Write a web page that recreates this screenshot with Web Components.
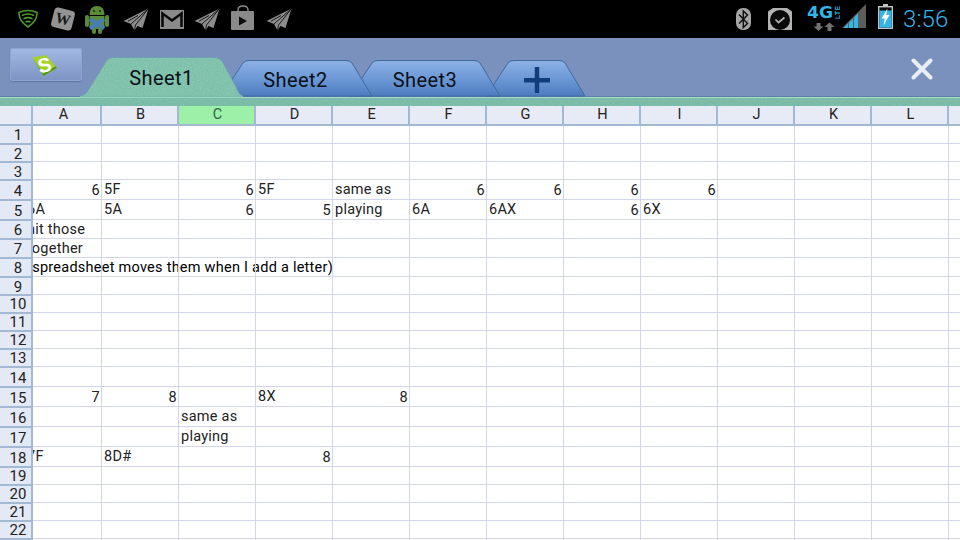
<!DOCTYPE html>
<html><head><meta charset="utf-8"><style>
html,body{margin:0;padding:0;width:960px;height:540px;overflow:hidden;background:#fff}
body{font-family:Roboto,"Liberation Sans",sans-serif}
x-app{display:flex;flex-direction:column;width:960px;height:540px;overflow:hidden}
</style></head><body>
<x-app>
  <x-statusbar></x-statusbar>
  <x-tabbar>
    <x-logo-button></x-logo-button>
    <x-tab variant="active" style="--w:163px;--h:39px;--ml:-2px;z-index:4">Sheet1</x-tab>
    <x-tab style="--w:151px;--h:36px;--ml:-22px;--sx:-2px;z-index:3">Sheet2</x-tab>
    <x-tab style="--w:150px;--h:36px;--ml:-22px;z-index:2">Sheet3</x-tab>
    <x-tab style="--w:99px;--h:36px;--ml:-14px;--sx:2px;--sy:-1px;z-index:1"><svg width="26" height="26" viewBox="0 0 26 26" style="display:block;margin-top:2px"><path d="M0 11h26v4.4H0zM10.800 0h4.400v26h-4.400z" fill="#123d7c"/></svg></x-tab>
    <x-close></x-close>
  </x-tabbar>
  <x-strip></x-strip>
  <x-sheet></x-sheet>
</x-app>
<script>
function def(name, css, html, extra){
  customElements.define(name, class extends HTMLElement{
    constructor(){super();const r=this.attachShadow({mode:'open'});r.innerHTML='<style>'+css+'</style>'+html;}
    connectedCallback(){ if(extra) extra(this); }
  });
}
const plane='<svg width="26" height="23" viewBox="0 0 26 23"><path d="M25.500 .5 .5 13 8 16 11.500 22.500 14.500 18 19.500 20z" fill="#8c8c8c"/><path d="M25.500 .5 8 16M25.500 .5 12.500 17 11.500 22.500M5 13.200 15 7.500" fill="none" stroke="#0c0c0c" stroke-width=".9"/></svg>';
def('x-statusbar',`
 :host{display:flex;align-items:center;height:38px;background:#000;flex:none;box-sizing:border-box;padding-left:18px}
 svg{display:block;flex:none}
 .r{margin-left:auto;display:flex;align-items:center}
 .t{color:#33b5e5;font:300 24px Roboto,sans-serif;margin-left:10px;margin-right:10px;width:47px;letter-spacing:.1px;line-height:38px}
`,`
 <svg width="20" height="19" viewBox="0 0 20 19" style="margin-top:-1px"><path d="M1 3.500Q10-.5 19 3.500 19.500 12 10 18 .5 12 1 3.500z" fill="none" stroke="#4d9a2a" stroke-width="1.600"/><path d="M4 6.500Q10 3.500 16 6.500M5.500 9.800Q10 7.600 14.500 9.800M7.500 13Q10 11.800 12.500 13" fill="none" stroke="#4d9a2a" stroke-width="1.700"/></svg>
 <svg width="27" height="26" viewBox="0 0 27 26" style="margin-left:12px"><rect x="2.500" y="3" width="21" height="20" rx="3.500" fill="#939393" transform="rotate(14 13 13)"/><text x="13" y="18" text-anchor="middle" font-family="Liberation Serif,serif" font-weight="700" font-size="15" fill="#1a1a1a" transform="rotate(14 13 13)">W</text></svg>
 <svg width="24" height="29" viewBox="0 0 24 29" style="margin-left:8px"><path d="M4.500 10Q4.500 1 12 1T19.500 10z" fill="#5b8a36"/><path d="M4.500 11h15v10q0 3-3 3h-9q-3 0-3-3z" fill="#5b8a36"/><rect x="0" y="10" width="4" height="12" rx="2" fill="#5b8a36"/><rect x="20" y="10" width="4" height="12" rx="2" fill="#5b8a36"/><rect x="7" y="23" width="4" height="6" rx="2" fill="#5b8a36"/><rect x="13" y="23" width="4" height="6" rx="2" fill="#5b8a36"/><path d="M5 14l14 9.500M19 14 5 23.500" stroke="#4a7cb4" stroke-width="4.200"/><circle cx="9" cy="6" r="1" fill="#1a2a10"/><circle cx="15" cy="6" r="1" fill="#1a2a10"/></svg>
 <span style="margin-left:14px;display:block">${plane}</span>
 <svg width="24" height="19" viewBox="0 0 24 19" style="margin-left:11px"><rect width="24" height="19" fill="#8a8a8a"/><path d="M2.500 17V3.500L12 10.500 21.500 3.500V17" fill="none" stroke="#0a0a0a" stroke-width="2.600"/></svg>
 <span style="margin-left:10px;display:block">${plane}</span>
 <svg width="24" height="25" viewBox="0 0 24 25" style="margin-left:11px;margin-top:-3px"><path d="M7 7V5q0-4 5-4t5 4v2" fill="none" stroke="#8a8a8a" stroke-width="1.400"/><rect y="6" width="23" height="19" rx="1" fill="#8a8a8a"/><path d="M8 11.500v9L16 16z" fill="#0a0a0a"/></svg>
 <span style="margin-left:11px;display:block">${plane}</span>
 <div class="r">
  <svg width="15" height="23" viewBox="0 0 15 23"><rect width="15" height="22" rx="7" fill="#a6a6a6"/><path d="M3 6.500l8.500 9-4.200 4V3l4.200 4-8.500 8.500" fill="none" stroke="#111" stroke-width="1.500"/></svg>
  <svg width="24" height="24" viewBox="0 0 24 24" style="margin-left:17px"><path d="M0 4.500 5 1h14l5 3.500V23H0z" fill="#b3b3b3"/><circle cx="12" cy="13" r="10" fill="#0a0a0a"/><path d="M7.500 12.500l3 3 6-5" fill="none" stroke="#b3b3b3" stroke-width="1.700"/></svg>
  <svg width="33" height="30" viewBox="0 -4 33 30" style="margin-left:15px;margin-top:-1px;margin-bottom:0;position:relative;top:-2px"><text x="0" y="12" font-family="DejaVu Sans,sans-serif" font-weight="700" font-size="15" fill="#33b5e5" textLength="26" lengthAdjust="spacingAndGlyphs">4G</text><text transform="translate(32.500 13) rotate(-90)" font-family="Liberation Sans,sans-serif" font-weight="700" font-size="6.500" fill="#33b5e5" textLength="13">LTE</text><path d="M7.500 16.500h4v3.500h3L9.500 24.500 4.500 20h3zM20.500 16 25.500 20.500h-3v4h-4v-4h-3z" fill="#727272" transform="translate(2 .5)"/></svg>
  <svg width="24" height="25" viewBox="0 0 24 25" style="margin-left:2px;margin-top:-5px"><path d="M24 0V24H0z" fill="#5d5d5d"/><path d="M1.500 24 6 19.500V24zM7 24V18.500L11 14.500V24zM12 24V13.500L16 9.500V24z" fill="#33b5e5"/></svg>
  <svg width="15" height="25" viewBox="0 0 15 25" style="margin-left:12px;margin-top:-5px"><path d="M5 0h5v2H5z" fill="#c4c4c4"/><rect x=".7" y="2.700" width="13.600" height="21.600" fill="#0a0a0a" stroke="#c4c4c4" stroke-width="1.400"/><rect x="1.400" y="6.500" width="12.200" height="17.100" fill="#33b5e5"/><path d="M9.500 4.500 3.500 14.500h3.200L5.500 21.500l6-10.500H8.300z" fill="#fff"/></svg>
  <span class="t">3:56</span>
 </div>
`);
def('x-tabbar',`
 :host{display:flex;align-items:flex-end;height:59px;flex:none;box-sizing:border-box;padding-left:10px;background:#7a90bd;border-bottom:1px solid #5e7fa8;position:relative}
`,`<slot></slot>`);
def('x-logo-button',`
 :host{display:flex;align-items:center;justify-content:center;width:72px;height:33px;align-self:flex-start;margin-top:10px;flex:none;box-sizing:border-box;border-radius:3px;background:linear-gradient(#a2b9e4,#7d94c4);box-shadow:0 1px 1px #5f75a2,inset 0 0 0 1px #8fa5d2}
 svg{display:block;margin-left:-2px}
`,`<svg width="26" height="24" viewBox="0 0 26 24"><path d="M.5 4.500 14 2 25 15 11.500 23z" fill="#a4d226"/><path d="M11.500 23 25 15 23.500 13.200 11 20.500 1.500 6 .5 4.500z" fill="#4e9a18"/><text x="12.700" y="19" text-anchor="middle" font-family="Liberation Sans,sans-serif" font-weight="700" font-size="20" fill="#fff" transform="rotate(-14 13 13)">S</text></svg>`);
def('x-tab',`
 :host{display:flex;align-items:center;justify-content:center;width:var(--w);height:var(--h);margin-left:var(--ml);position:relative;flex:none;font:20px Roboto,sans-serif;letter-spacing:.42px;color:#0a1018}
 svg.bg{position:absolute;inset:0;width:100%;height:100%;overflow:visible}
 span{position:relative;margin-top:3px;margin-left:var(--sx,0);top:var(--sy,0)}
`,`<svg class="bg"></svg><span><slot></slot></span>`,(el)=>{
  const w=parseInt(el.style.getPropertyValue('--w')),h=parseInt(el.style.getPropertyValue('--h'));
  const s=el.shadowRoot.querySelector('svg.bg');
  s.setAttribute('viewBox',`0 0 ${w} ${h}`);
  if(el.getAttribute('variant')==='active'){
    const d='M0 39.500Q5 39 9 32L27 3Q29 .5 34 .5H134Q139 .5 142 4L156 30Q159 38 163 39.500z';
    s.innerHTML=`<defs><filter id="n" x="0" y="0" width="100%" height="100%"><feTurbulence type="fractalNoise" baseFrequency=".9" numOctaves="2"/><feColorMatrix values="0 0 0 0 1 0 0 0 0 1 0 0 0 0 1 .5 0 0 0 -.1"/><feComposite in2="SourceGraphic" operator="in"/></filter></defs>
    <path d="${d}" fill="#78bea6" stroke="#6c9db4" stroke-width="1"/>
    <path d="${d}" fill="#000" filter="url(#n)" opacity=".5"/>
    <path d="M0 39.500h163" stroke="#78bea6" stroke-width="1.500"/>`;
  } else {
    const tl=24, tr=w-22;
    const id='g'+w;
    s.innerHTML=`<defs><linearGradient id="${id}" x1="0" y1="0" x2="0" y2="1"><stop offset="0" stop-color="#8db2e6"/><stop offset=".55" stop-color="#6a96d4"/><stop offset="1" stop-color="#4d7cbe"/></linearGradient></defs>
    <path d="M0 ${h}L${tl-2} 3Q${tl} .5 ${tl+4} .5H${tr-4}Q${tr} .5 ${tr+2} 3L${w} ${h}z" fill="url(#${id})" stroke="#3f6a9e" stroke-width="1"/>`;
  }
});
def('x-close',`
 :host{display:block;margin-left:auto;margin-right:27px;align-self:flex-start;margin-top:20px;width:22px;height:22px;flex:none}
 svg{display:block}
`,`<svg width="22" height="22" viewBox="0 0 22 22"><path d="M2.500 2.500 19.500 19.500M19.500 2.500 2.500 19.500" stroke="#e9edf5" stroke-width="4" stroke-linecap="round"/></svg>`);
def('x-strip',`
 :host{display:block;height:9px;flex:none;background:#72b8a2;border-top:1px solid #a7dccb;box-sizing:border-box;position:relative;overflow:hidden}
 svg{position:absolute;inset:0;width:100%;height:100%}
`,`<svg><filter id="n"><feTurbulence type="fractalNoise" baseFrequency=".9" numOctaves="2"/><feColorMatrix values="0 0 0 0 1 0 0 0 0 1 0 0 0 0 1 .5 0 0 0 -.1"/></filter><rect width="100%" height="100%" filter="url(#n)" opacity=".45"/></svg>`);
const heights=[18,18,18,20,20,19,19,19,18,18,18,18,18,20,20,20,20,20,18,18,18,18,18];
const cols='ABCDEFGHIJKLM'.split('');
const data={
 '4':{A:[6],B:'5F',C:[6],D:'5F',E:'same as',F:[6],G:[6],H:[6],I:[6]},
 '5':{A:'6A',B:'5A',C:[6],D:[5],E:'playing',F:'6A',G:'6AX',H:[6],I:'6X'},
 '6':{A:'hit those'},'7':{A:'together'},'8':{A:'<b>(spreadsheet moves them when I add a letter)</b>'},
 '15':{A:[7],B:[8],D:'8X',E:[8]},
 '16':{C:'same as'},'17':{C:'playing'},
 '18':{A:'7F',B:'8D#',D:[8]}
};
def('x-sheet',`
 :host{display:grid;grid-template-columns:33px 1fr;grid-template-rows:20px 1fr;flex:1;min-height:0;overflow:hidden;font:14.5px Roboto,sans-serif;color:#222;background:#fff}
 .corner{background:#e6ebf6;border-right:2px solid #a3b9d3;border-bottom:2px solid #a3b9d3;box-sizing:border-box}
 .chead{overflow:hidden;background:#e6ebf6}
 .chead>div{display:grid;grid-template-columns:repeat(13,77px);margin-left:-8px;height:100%}
 .ch{box-sizing:border-box;border-right:2px solid #a3b9d3;border-bottom:2px solid #a3b9d3;text-align:center;padding-left:2px;line-height:17px;font-size:14.5px}
 .ch.sel{background:#9cf0a8;color:#35604a}
 .rhead{display:grid;align-content:start;background:#e4eaf5;overflow:hidden}
 .rh{box-sizing:border-box;background:#e4eaf5;border-right:2px solid #a3b9d3;border-top:1px solid #a3b9d3;border-bottom:1px solid #a3b9d3;display:flex;align-items:center;justify-content:center;font-size:15px;padding-left:5px;padding-top:1px}
 .rh.first{border-top:none}
 .rh.up{padding-top:0}
 .bodyv{overflow:hidden}
 .body{display:grid;grid-template-columns:repeat(13,77px);margin-left:-8px;align-content:start}
 .c{box-sizing:border-box;border-right:1px solid #d3d5e8;border-bottom:1px solid #d3d5e8;white-space:nowrap;padding:1px 2px 0;line-height:17px;letter-spacing:.25px;min-width:0}
 .c b{font-weight:400;color:#000}
 .c.n{text-align:right;line-height:19px;padding-right:1px}
`,`<div class="corner"></div><div class="chead"><div id="ch"></div></div><div class="rhead" id="rh"></div><div class="bodyv"><div class="body" id="b"></div></div>`,(el)=>{
  const r=el.shadowRoot;
  if(r.getElementById('b').children.length) return;
  r.getElementById('ch').innerHTML=cols.map((c,i)=>`<div class="ch${c=='C'?' sel':''}">${c=='M'?'':c}</div>`).join('');
  r.getElementById('rh').innerHTML=heights.map((h,i)=>`<div class="rh${i==0?' first':''}${i>=9&&h==18?' up':''}" style="height:${h}px">${i<22?i+1:''}</div>`).join('');
  r.getElementById('b').style.gridTemplateRows=heights.map(h=>h+'px').join(' ');
  let s='';
  heights.forEach((h,i)=>{cols.forEach(c=>{
    const v=(data[i+1]||{})[c];
    if(v===undefined) s+='<div class="c"></div>';
    else if(Array.isArray(v)) s+=`<div class="c n">${v[0]}</div>`;
    else s+=`<div class="c">${v}</div>`;
  });});
  r.getElementById('b').innerHTML=s;
});
</script>
</body></html>
